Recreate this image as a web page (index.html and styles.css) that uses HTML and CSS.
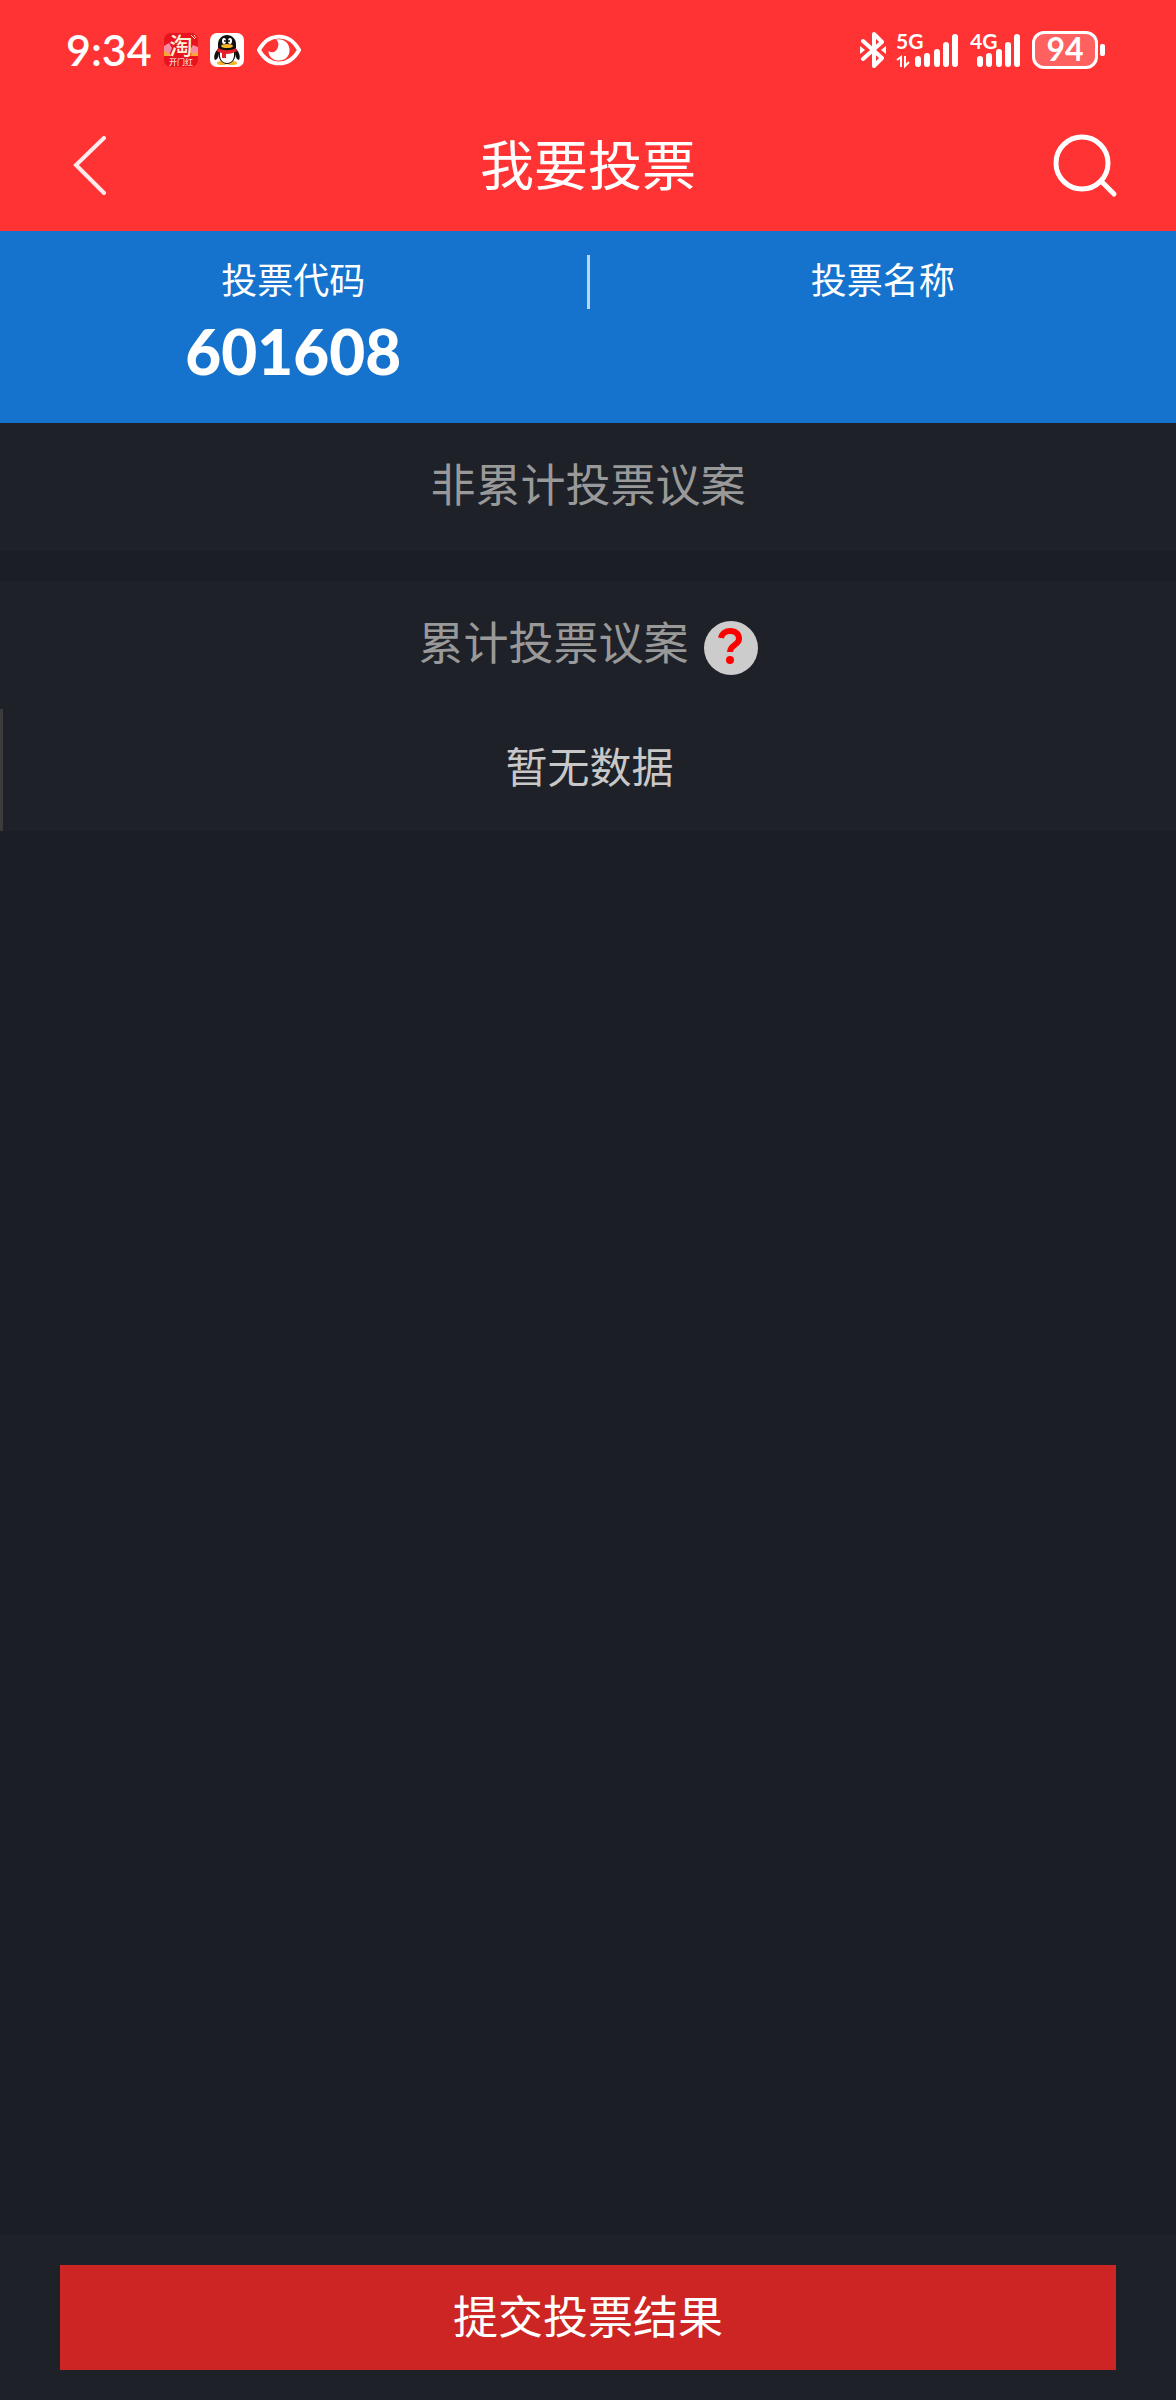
FILE: index.html
```html
<!DOCTYPE html>
<html lang="zh-CN">

<head>
    <meta charset="UTF-8">
    <meta name="viewport" content="width=device-width, initial-scale=1.0">
    <title>我要投票</title>
    <link rel="stylesheet" href="styles.css">
</head>

<body>

    <!-- 状态栏 -->
    <div class="status-bar">
        <div class="status-left">
            <span class="time">9:34</span>
            <svg class="app-icon" width="34" height="50" viewBox="0 -8 34 50">
                <rect width="34" height="34" rx="7" fill="#e8131f"/>
                <path d="M0 13l5-3 3 5-3 7H0zM34 14l-5-2-3 5 2 6h6z" fill="#f58aa5"/>
                <path d="M0 18l5 2 3 3H0zM34 19l-5 1-3 3h8z" fill="#f8a53c"/>
                <path d="M27 2l4 4M30 2l2 3" stroke="#ffd8b0" stroke-width="1"/>
                <text x="17" y="21" class="tao-main">淘</text>
                <text x="17" y="32" class="tao-sub">开门红</text>
            </svg>
            <svg class="app-icon" width="34" height="34" viewBox="0 0 34 34">
                <rect width="34" height="34" rx="7" fill="#fff"/>
                <ellipse cx="12" cy="30" rx="5" ry="2" fill="#f7b52c"/>
                <ellipse cx="22" cy="30" rx="5" ry="2" fill="#f7b52c"/>
                <path d="M9 15C5 18 3 24 5 27c1 0 3-2 3-3M25 15c4 3 6 9 4 12-1 0-3-2-3-3" fill="#111"/>
                <path d="M17 2c-5 0-9 4-9 9v8c0 7 4 12 9 12s9-5 9-12v-8c0-5-4-9-9-9z" fill="#111"/>
                <path d="M10 19h14v3c0 5-3 8-7 8s-7-3-7-8z" fill="#fff"/>
                <ellipse cx="14" cy="8" rx="2" ry="3" fill="#fff"/>
                <ellipse cx="20" cy="8" rx="2" ry="3" fill="#fff"/>
                <circle cx="15" cy="8" r="1" fill="#111"/>
                <circle cx="19" cy="8" r="1" fill="#111"/>
                <ellipse cx="17" cy="13" rx="6" ry="2" fill="#f7b52c"/>
                <path d="M8 15c5 3 13 3 18 0l1 3c-3 2-7 3-11 3v4h-4v-5c-2 0-4-1-5-2z" fill="#e6202a"/>
            </svg>
            <svg class="eye-icon" width="46" height="34" viewBox="0 0 48 34">
                <path d="M3 17C8 8 15 3 24 3s16 5 21 14c-5 9-12 14-21 14S8 26 3 17z" fill="none" stroke="#fff" stroke-width="4" stroke-linejoin="round"/>
                <path d="M21 6c8-1 14 4 14 11s-5 11-11 11-11-4-11-10c3 2 7 2 9-2s2-7-1-10z" fill="#fff"/>
            </svg>
        </div>
        <div class="status-right">
            <svg width="26" height="36" viewBox="0 0 26 36">
                <path d="M3 9l19 17-8 8V2l8 8L3 27" fill="none" stroke="#fff" stroke-width="4" stroke-linejoin="round" stroke-linecap="round"/>
                <path d="M0 14l5 4-5 4zM26 14l-5 4 5 4z" fill="#fff"/>
            </svg>
            <svg width="64" height="52" viewBox="0 -8 64 52">
                <text x="0" y="17" class="net">5G</text>
                <path d="M1 28l4-3v10M9 24v10l4-4" fill="none" stroke="#fff" stroke-width="2"/>
                <path d="M22 27v5M31 24v8M41 20v12M50 13v19M59 5v27" stroke="#fff" stroke-width="6" stroke-linecap="round"/>
            </svg>
            <svg width="52" height="52" viewBox="0 -8 52 52">
                <text x="0" y="17" class="net">4G</text>
                <path d="M10 27v5M19 24v8M29 20v12M38 13v19M47 5v27" stroke="#fff" stroke-width="6" stroke-linecap="round"/>
            </svg>
            <div class="battery">
                <span class="battery-level">94</span>
                <span class="battery-tip"></span>
            </div>
        </div>
    </div>

    <!-- 标题栏 -->
    <header class="header">
        <a href="#" class="back" aria-label="返回">
            <svg width="34" height="60" viewBox="0 0 34 60">
                <path d="M31 2L3 29l28 28" fill="none" stroke="#fff" stroke-width="4" stroke-linecap="round" opacity="0.9"/>
            </svg>
        </a>
        <h1>我要投票</h1>
        <button type="button" class="search" aria-label="搜索">
            <svg width="66" height="66" viewBox="0 0 66 66">
                <circle cx="30" cy="30" r="26" fill="none" stroke="#fff" stroke-width="5"/>
                <path d="M49 48l13 13" stroke="#fff" stroke-width="5" stroke-linecap="round"/>
            </svg>
        </button>
    </header>

    <!-- 投票信息 -->
    <div class="vote-info">
        <div class="info-item">
            <div class="info-label">投票代码</div>
            <div class="info-value">601608</div>
        </div>
        <div class="info-divider"></div>
        <div class="info-item">
            <div class="info-label">投票名称</div>
        </div>
    </div>

    <main class="content">
        <section class="section">
            <h2>非累计投票议案</h2>
        </section>

        <section class="section">
            <h2>累计投票议案
                <button type="button" class="help" aria-label="帮助">
                    <svg width="54" height="54" viewBox="0 0 54 54">
                        <path d="M17 17c1-5 5-7 9-7 6 0 9 3 9 8 0 6-9 6-9 13" fill="none" stroke="#f00" stroke-width="6"/>
                        <circle cx="26" cy="39" r="4" fill="#f00"/>
                    </svg>
                </button>
            </h2>
            <p class="empty">暂无数据</p>
        </section>
    </main>

    <!-- 底部提交 -->
    <footer class="footer">
        <button type="submit" class="submit">提交投票结果</button>
    </footer>

</body>

</html>
```

FILE: styles.css
```css
* {
    box-sizing: border-box;
}

body {
    font-family: Lato, "Noto Sans CJK SC", sans-serif;
    background-color: #1b1e25;
    color: #fff;
    margin: 0;
    min-height: 100vh;
    display: flex;
    flex-direction: column;
}

svg {
    display: block;
}

button {
    border: none;
    padding: 0;
    background: none;
    font-family: inherit;
    cursor: pointer;
}

/* 状态栏 */
.status-bar {
    display: flex;
    justify-content: space-between;
    align-items: center;
    height: 100px;
    padding: 0 71px 0 66px;
    background-color: #ff3333;
}

.status-left,
.status-right {
    display: flex;
    align-items: center;
}

.status-left {
    gap: 12px;
}

.status-right {
    gap: 10px;
}

.time {
    font-size: 43px;
    line-height: 48px;
    font-weight: 600;
}

.tao-main {
    font-size: 23px;
    font-weight: 500;
    fill: #fff0d8;
    text-anchor: middle;
}

.tao-sub {
    font-size: 8px;
    fill: #fff;
    text-anchor: middle;
}

.net {
    font-size: 21px;
    font-weight: 700;
    fill: #fff;
}

.battery {
    display: flex;
    align-items: center;
    gap: 2px;
}

.battery-level {
    width: 66px;
    height: 38px;
    border: 3px solid #fff;
    border-radius: 12px;
    background-color: #ff6060;
    font-size: 32px;
    line-height: 30px;
    font-weight: 700;
    text-align: center;
}

.battery-tip {
    width: 5px;
    height: 12px;
    border-radius: 2px;
    background-color: #fff;
}

/* 标题栏 */
.header {
    display: grid;
    grid-template-columns: 1fr auto 1fr;
    align-items: center;
    height: 131px;
    padding: 0 58px;
    background-color: #ff3333;
}

.header h1 {
    margin: 0;
    font-size: 54px;
    line-height: 80px;
    font-weight: 400;
}

.back {
    padding-left: 15px;
}

.search {
    justify-self: end;
}

/* 投票信息 */
.vote-info {
    display: flex;
    height: 192px;
    padding-top: 24px;
    background-color: #1673cd;
    text-align: center;
}

.info-item {
    flex: 1;
}

.info-label {
    font-size: 36px;
    line-height: 50px;
}

.info-value {
    font-size: 62px;
    line-height: 92px;
    font-weight: 900;
}

.info-divider {
    width: 3px;
    height: 54px;
    background-color: #b9d5f0;
}

/* 议案列表 */
.content {
    flex: 1;
}

.section {
    margin-bottom: 30px;
    background-color: #1e2128;
}

.section h2 {
    display: flex;
    justify-content: center;
    align-items: center;
    gap: 15px;
    height: 128px;
    margin: 0;
    padding-bottom: 10px;
    color: #999;
    font-size: 45px;
    font-weight: 400;
}

.help {
    margin-top: 16px;
    border-radius: 50%;
    background-color: #ccc;
}

.empty {
    margin: 0;
    padding-bottom: 6px;
    border-left: 3px solid #3b3b3b;
    color: #c8c8c8;
    font-size: 42px;
    line-height: 116px;
    text-align: center;
}

/* 底部按钮 */
.footer {
    padding: 30px 60px;
    background-color: #1e2128;
}

.submit {
    display: block;
    width: 100%;
    height: 105px;
    padding-bottom: 6px;
    background-color: #cd2424;
    color: #fff;
    font-size: 45px;
}
```
